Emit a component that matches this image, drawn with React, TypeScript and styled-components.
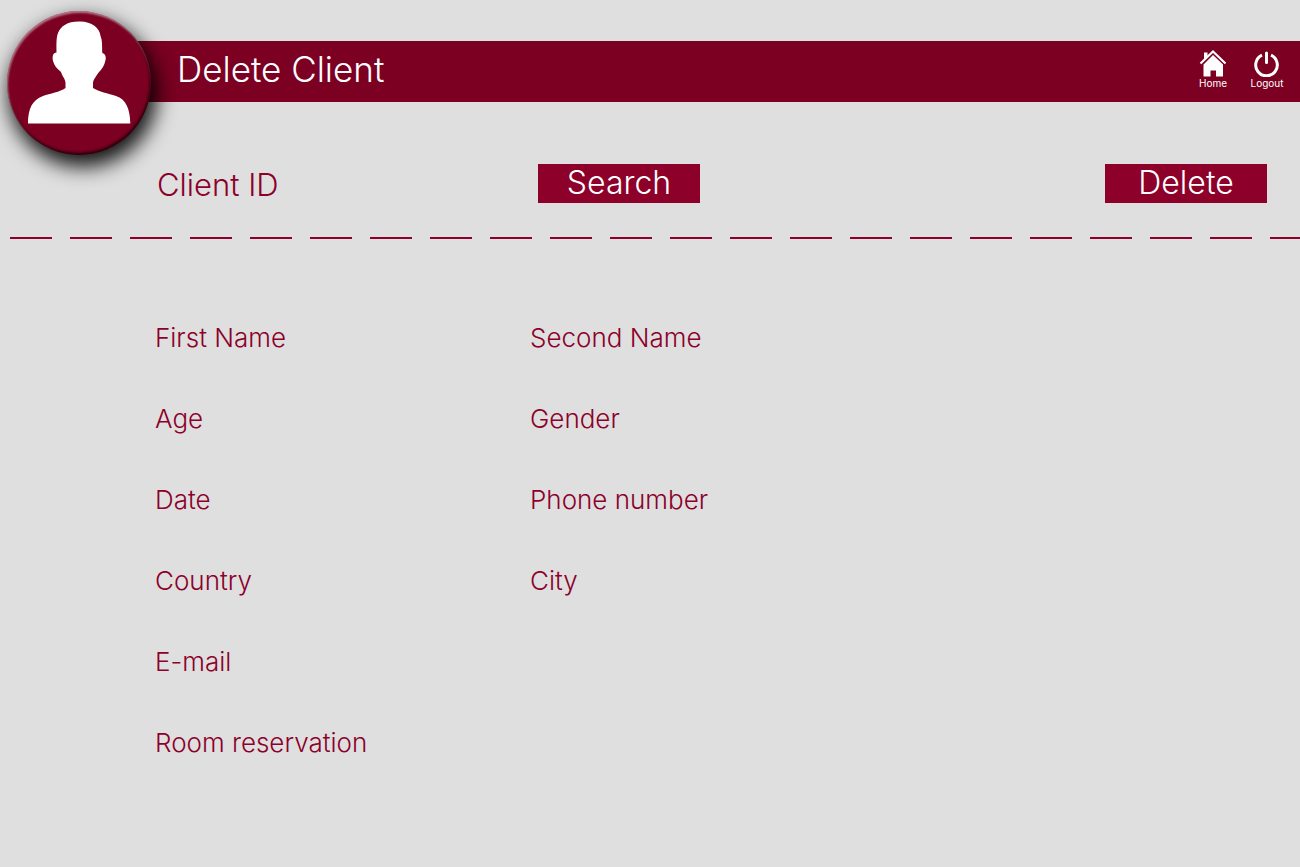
import React from "react";
import styled, { createGlobalStyle } from "styled-components";

const GlobalStyle = createGlobalStyle`
  *, *::before, *::after { box-sizing: border-box; }
  body {
    margin: 0;
    background: #dfdfdf;
    color: #8c002a;
    font-family: "Century Gothic", Inter, "Liberation Sans", sans-serif;
    font-weight: 300;
  }
`;

const Page = styled.div`
  min-height: 100vh;
  padding-top: 41px;
  overflow-x: hidden;
`;

const Header = styled.header`
  position: relative;
  display: flex;
  align-items: center;
  justify-content: space-between;
  height: 61px;
  margin-left: 79px;
  padding: 0 15px 5px 98px;
  background: #7b0022;
  color: #fff;
`;

const Avatar = styled.div`
  position: absolute;
  left: -72px;
  top: -30px;
  width: 144px;
  height: 144px;
  border-radius: 50%;
  background: #7b0022;
  box-shadow:
    4px 10px 20px 2px rgba(0, 0, 0, 0.9),
    inset 1px 2px 2px rgba(255, 255, 255, 0.45),
    inset -1px -2px 3px rgba(0, 0, 0, 0.7);

  svg { display: block; }
`;

const Title = styled.h1`
  margin: 0;
  font-size: 35px;
  line-height: 44px;
  font-weight: 300;
`;

const Nav = styled.nav`
  display: flex;
  gap: 18px;
`;

const NavLink = styled.a`
  display: flex;
  flex-direction: column;
  align-items: center;
  min-width: 36px;
  color: #fff;
  font-size: 10px;
  line-height: 13px;
  font-weight: 400;
  text-decoration: none;
`;

const SearchBar = styled.form`
  display: grid;
  grid-template-columns: 121px 260px 162px 1fr;
  align-items: center;
  padding: 61px 33px 34px 157px;
`;

const IdLabel = styled.label`
  padding-top: 4px;
  font-size: 31px;
  line-height: 36px;
  white-space: nowrap;
`;

const IdInput = styled.input`
  min-width: 0;
  height: 40px;
  margin: 0 16px;
  border: 0;
  outline: 0;
  background: transparent;
  color: inherit;
  font: inherit;
  font-size: 26px;
`;

const Button = styled.button<{ $end?: boolean }>`
  width: 162px;
  height: 39px;
  padding: 0 0 2px;
  border: 0;
  background: #8c002a;
  color: #fff;
  font: inherit;
  font-size: 32px;
  line-height: 37px;
  justify-self: ${(p) => (p.$end ? "end" : "start")};
  cursor: pointer;
`;

const Divider = styled.hr`
  height: 2px;
  margin: 0 0 0 10px;
  border: 0;
  background: repeating-linear-gradient(to right, #8c002a 0 42px, transparent 42px 60px);
`;

const Details = styled.dl`
  display: grid;
  grid-template-columns: 375px 1fr;
  grid-auto-rows: 81px;
  margin: 0;
  padding: 82px 33px 0 155px;
`;

const Field = styled.div<{ $wide?: boolean }>`
  grid-column: ${(p) => (p.$wide ? "1 / -1" : "auto")};
`;

const FieldName = styled.dt`
  font-size: 26px;
  line-height: 34px;
`;

const FieldValue = styled.dd`
  margin: 0;
`;

const fields: { name: string; wide?: boolean }[] = [
  { name: "First Name" },
  { name: "Second Name" },
  { name: "Age" },
  { name: "Gender" },
  { name: "Date" },
  { name: "Phone number" },
  { name: "Country" },
  { name: "City" },
  { name: "E-mail", wide: true },
  { name: "Room reservation", wide: true },
];

const Silhouette = () => (
  <svg width="144" height="144" viewBox="7 11 144 144" aria-hidden="true">
    <path
      fill="#fff"
      d="M79 21.500C91 21 100 28 100.500 36C102.500 40 102 47 102.300 53C106 54 106.500 58 105 62C104 67 100 71 97.500 74C95 78 93 80 93 83V88C99 91.500 108 93.500 116 96C126 99 130 109 130.300 123.500H28C28 109 32 100 43 96C50 93.500 60 92 65.500 88V83C65.500 79 62 76 61 72C57 69 54 65 53 61C52 56 53 53 56.500 52.500C56.500 46 56 38 58 33C61 26 67 21.500 79 21.500Z"
    />
  </svg>
);

const HomeIcon = () => (
  <svg width="28" height="28" viewBox="0 0 28 28" aria-hidden="true">
    <path d="M1.500 14.500 14 2.500 26.500 14.500" fill="none" stroke="#fff" strokeWidth="2.200" />
    <path fill="#fff" d="M5 3.500h3.500v3.500L5 10.500zM14 6 24 15.500V27.500H17v-6h-5.500v6H4.500V15.500z" />
  </svg>
);

const PowerIcon = () => (
  <svg width="28" height="28" viewBox="0 0 28 28" aria-hidden="true">
    <g fill="none" stroke="#fff" strokeWidth="3">
      <path d="M9 6.200A10.800 10.800 0 1 0 18 6.200" />
      <path d="M13.500 4V13.500" strokeLinecap="round" />
    </g>
  </svg>
);

export default function App() {
  return (
    <>
      <GlobalStyle />
      <Page>
        <Header>
          <Avatar>
            <Silhouette />
          </Avatar>
          <Title>Delete Client</Title>
          <Nav>
            <NavLink href="#home">
              <HomeIcon />
              Home
            </NavLink>
            <NavLink href="#logout">
              <PowerIcon />
              Logout
            </NavLink>
          </Nav>
        </Header>
        <main>
          <SearchBar onSubmit={(e) => e.preventDefault()}>
            <IdLabel htmlFor="client-id">Client ID</IdLabel>
            <IdInput id="client-id" type="text" />
            <Button type="submit">Search</Button>
            <Button type="button" $end>
              Delete
            </Button>
          </SearchBar>
          <Divider />
          <Details>
            {fields.map((f) => (
              <Field key={f.name} $wide={f.wide}>
                <FieldName>{f.name}</FieldName>
                <FieldValue />
              </Field>
            ))}
          </Details>
        </main>
      </Page>
    </>
  );
}
